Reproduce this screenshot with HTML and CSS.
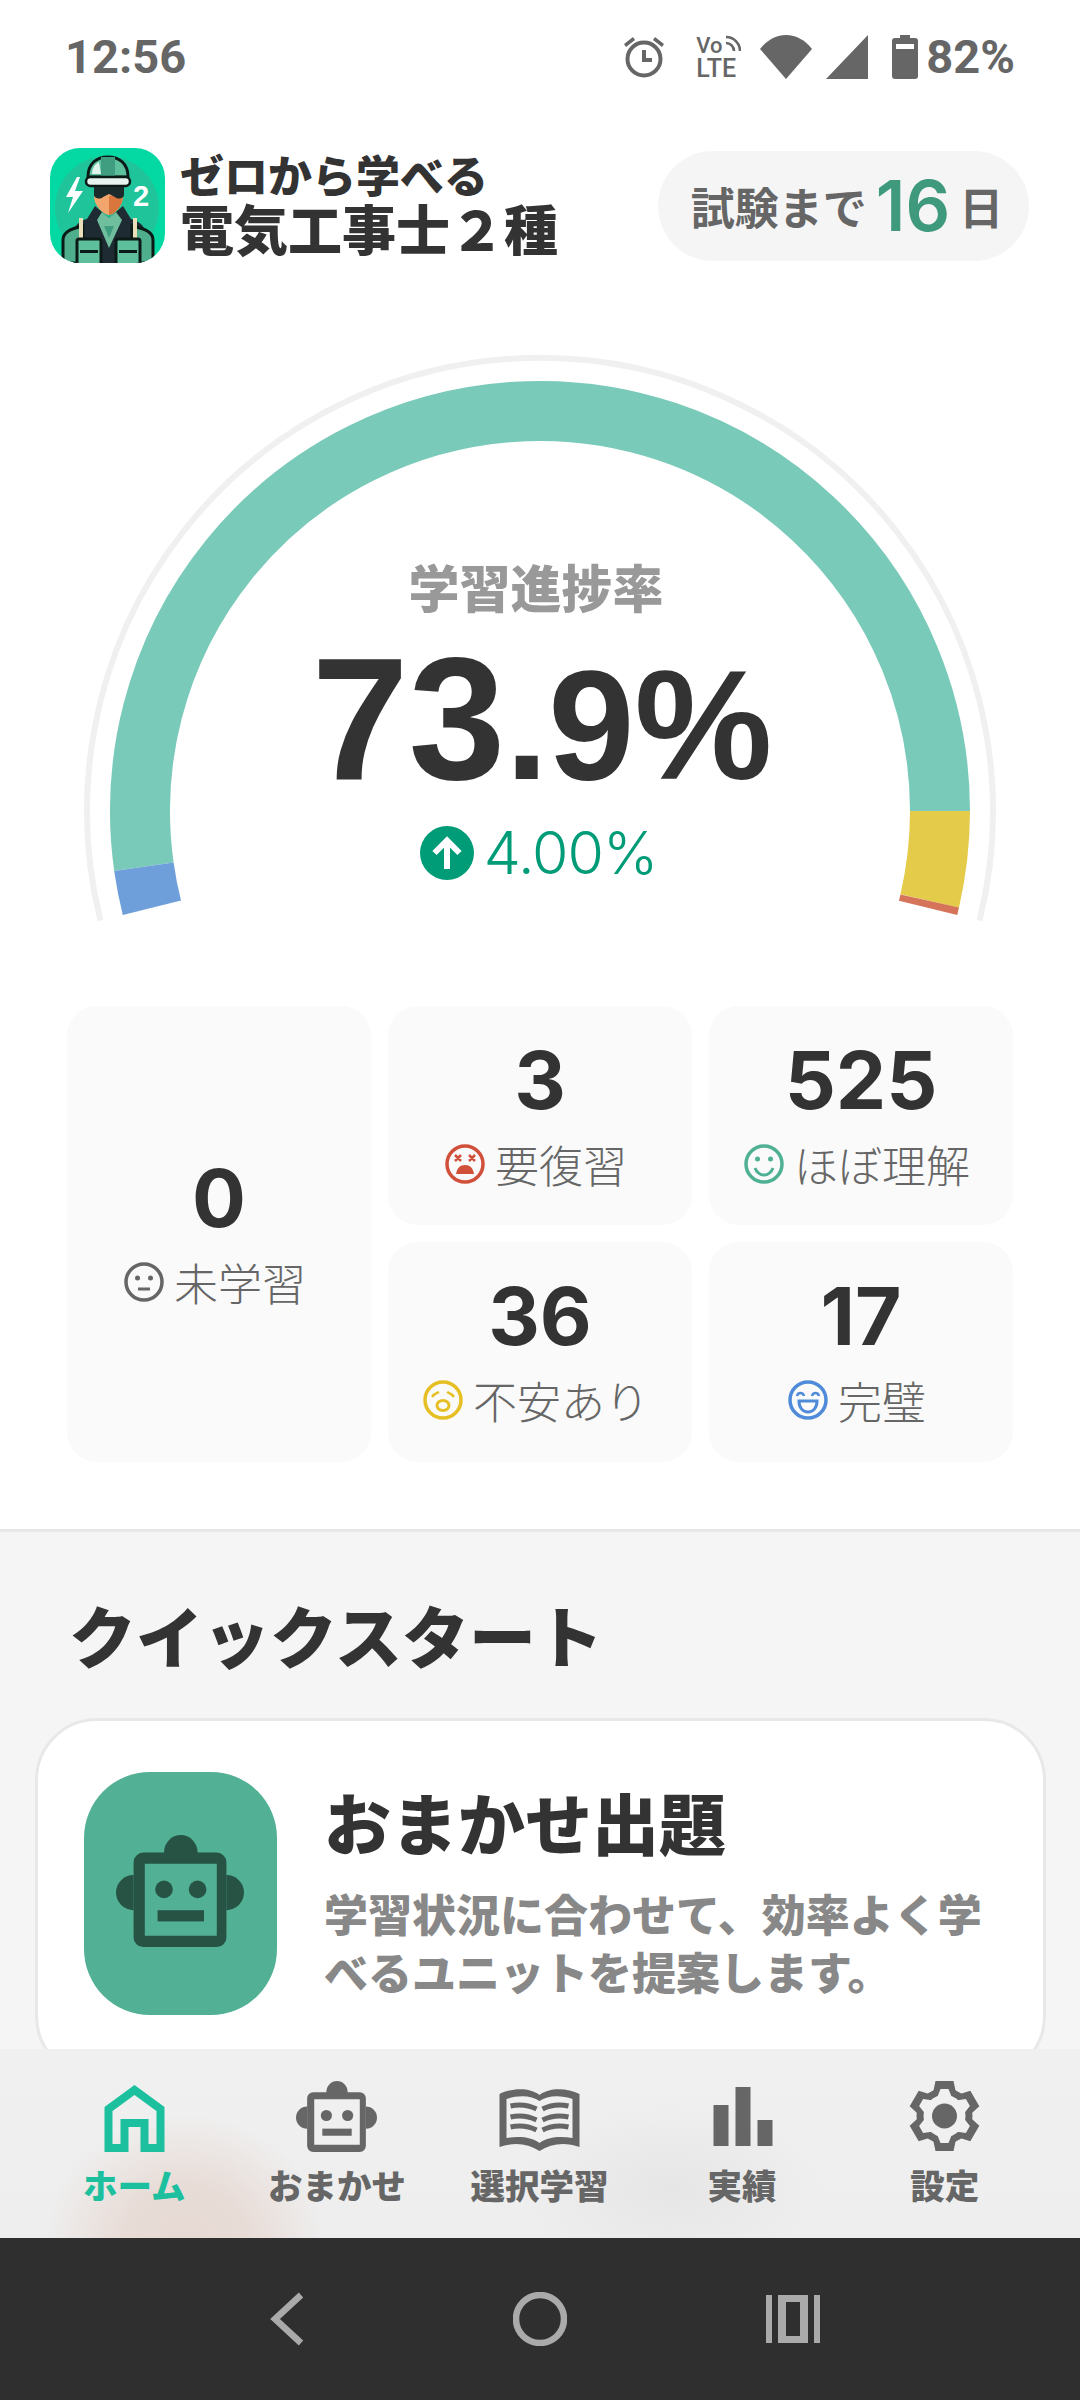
FILE: index.html
```html
<!DOCTYPE html>
<html lang="ja">
<head>
<meta charset="utf-8">
<title>電気工事士2種</title>
<link rel="stylesheet" href="styles.css">
</head>
<body>
<svg class="defs" width="0" height="0" aria-hidden="true">
  <symbol id="robot" viewBox="0 0 80 70">
    <path d="M30 11a10.500 11 0 0 1 21 0h12a6 6 0 0 1 6 6v47a6 6 0 0 1-6 6H17a6 6 0 0 1-6-6V17a6 6 0 0 1 6-6zM18 18v45h45V18z" fill-rule="evenodd"/>
    <path d="M11 25a11 11 0 0 0 0 22zM69 25a11 11 0 0 1 0 22z"/>
    <circle cx="30" cy="34" r="5.500"/><circle cx="51" cy="34" r="5.500"/>
    <rect x="26" y="47" width="29" height="7"/>
  </symbol>
</svg>
<div class="screen">
  <main class="content">
    <div class="status">
      <span class="clock">12:56</span>
      <div class="status-right">
        <svg class="st-alarm" viewBox="0 0 44 44"><circle cx="22" cy="24" r="16.500" fill="none" stroke="#666" stroke-width="4"/><path d="M22 15v10h8" fill="none" stroke="#666" stroke-width="4"/><path d="M2 9l9-7 2 3-9 7zM42 9l-9-7-2 3 9 7z" fill="#666"/></svg>
        <div class="st-volte"><span class="vo">Vo<svg class="vo-waves" viewBox="0 0 16 16"><path d="M1 8a8 8 0 0 1 8 8M1 2a14 14 0 0 1 14 14" fill="none" stroke="#666" stroke-width="2.600"/></svg></span><span class="lte">LTE</span></div>
        <svg class="st-wifi" viewBox="0 0 52 44"><path d="M26 44L0 14C7 5 16 0 26 0s19 5 26 14z" fill="#666"/></svg>
        <svg class="st-signal" viewBox="0 0 42 44"><path d="M42 0v44H0z" fill="#666"/></svg>
        <svg class="st-battery" viewBox="0 0 26 44"><path d="M8 0h10v3h5a3 3 0 0 1 3 3v35a3 3 0 0 1-3 3H3a3 3 0 0 1-3-3V6a3 3 0 0 1 3-3h5z" fill="#666"/><rect x="4" y="9" width="18" height="5" fill="#fff"/></svg>
        <span class="pct">82%</span>
      </div>
    </div>

    <header class="app-header">
      <svg class="logo" viewBox="0 0 115 115">
        <defs><clipPath id="logo-clip"><rect width="115" height="115" rx="30"/></clipPath></defs>
        <g clip-path="url(#logo-clip)">
          <rect width="115" height="115" fill="#05d9a3"/>
          <circle cx="57" cy="60" r="52" fill="#20c49b"/>
          <path d="M27 29L16 49h7l-5 16 15-22h-8l5-14z" fill="#fff"/>
          <text class="logo-two" x="83" y="58">2</text>
          <path d="M38 29c0-14 9-20 20-20s20 6 20 20z" fill="#5cc09c" stroke="#0b1a16" stroke-width="3"/>
          <rect x="51" y="9" width="14" height="20" fill="#3f9e7f"/>
          <path d="M42 26c0-6 3-10 7-12l2 12z" fill="#dff5ec"/>
          <path d="M44 38h29v10c0 10-9 19-14 19s-15-9-15-19z" fill="#f3a66b"/>
          <path d="M59 48v19c5 0 14-9 14-19z" fill="#d9763d"/>
          <rect x="36" y="29" width="44" height="9" rx="4.500" fill="#e8f2ee" stroke="#0b1a16" stroke-width="2.500"/>
          <path d="M44 39h30v8c0 3-6 5-9 2l-6-3-6 3c-3 3-9 1-9-2z" fill="#1b2a2a"/>
          <path d="M24 115V85c0-8 6-12 13-14l8-13 14 12 14-12 8 13c7 2 14 6 14 14v30z" fill="#1e2b33"/>
          <path d="M47 72l5-8 7 6 7-6 6 8-13 28z" fill="#6fbf9f"/>
          <path d="M54 78h10l-5 12z" fill="#3f9e7f"/>
          <path d="M13 115V92c0-7 6-11 20-14v37zM103 115V92c0-7-6-11-21-14v37z" fill="#4fae8c" stroke="#0b1a16" stroke-width="3"/>
          <path d="M29 70h4v22h-4zM83 70h4v22h-4z" fill="#e9dfb8"/>
          <rect x="27" y="91" width="24" height="30" rx="2" fill="#5ebf9c" stroke="#0b1a16" stroke-width="3"/>
          <rect x="66" y="91" width="24" height="30" rx="2" fill="#5ebf9c" stroke="#0b1a16" stroke-width="3"/>
          <rect x="30" y="102" width="18" height="3" fill="#0b1a16"/>
          <rect x="69" y="102" width="18" height="3" fill="#0b1a16"/>
        </g>
      </svg>
      <h1 class="app-title"><span class="title-top">ゼロから学べる</span><span class="title-main">電気工事士２種</span></h1>
      <div class="countdown"><span class="cd-text">試験まで</span><span class="cd-num">16</span><span class="cd-text">日</span></div>
    </header>

    <section class="gauge">
      <svg class="gauge-svg" viewBox="0 0 1080 590">
        <g fill="none">
          <path d="M100.500 580.600A453 453 0 1 1 979.500 580.600" stroke="#f0f0f0" stroke-width="6"/>
          <path d="M143.900 526.700A400 400 0 1 1 940 471" stroke="#7acab9" stroke-width="60"/>
          <path d="M151.900 567.800A400 400 0 0 1 143.900 526.700" stroke="#6f9fdb" stroke-width="60"/>
          <path d="M940 471A400 400 0 0 1 929.700 561" stroke="#e5cb4a" stroke-width="60"/>
          <path d="M929.700 561A400 400 0 0 1 928.100 567.800" stroke="#d5745a" stroke-width="60"/>
        </g>
      </svg>
      <div class="gauge-center">
        <div class="gauge-label">学習進捗率</div>
        <div class="gauge-value"><span class="gv-big">73</span><span class="gv-small">.9%</span></div>
        <div class="gauge-delta">
          <svg class="delta-icon" viewBox="0 0 54 54"><circle cx="27" cy="27" r="27" fill="#009b77"/><path d="M27 43V14M14.500 27L27 14.500 39.500 27" fill="none" stroke="#fff" stroke-width="6"/></svg>
          <span>4.00%</span>
        </div>
      </div>
    </section>

    <section class="stats">
      <div class="stat stat-tall">
        <div class="stat-num">0</div>
        <div class="stat-label">
          <svg class="face" viewBox="0 0 40 40" fill="none" stroke="#666" stroke-width="3.500"><circle cx="20" cy="20" r="18"/><path d="M14 27h12" stroke-width="3"/><circle cx="13.500" cy="16" r="2.500" fill="#666" stroke="none"/><circle cx="26.500" cy="16" r="2.500" fill="#666" stroke="none"/></svg>
          <span>未学習</span>
        </div>
      </div>
      <div class="stat">
        <div class="stat-num">3</div>
        <div class="stat-label">
          <svg class="face" viewBox="0 0 40 40" fill="none" stroke="#d1503a" stroke-width="3.500"><circle cx="20" cy="20" r="18"/><path d="M10 11l6 6M16 11l-6 6M24 11l6 6M30 11l-6 6" stroke-width="2.500"/><path d="M11 30c1-6 4-9 9-9s8 3 9 9z" fill="#d1503a" stroke="none"/></svg>
          <span>要復習</span>
        </div>
      </div>
      <div class="stat">
        <div class="stat-num">525</div>
        <div class="stat-label">
          <svg class="face" viewBox="0 0 40 40" fill="none" stroke="#4fb094" stroke-width="3.500"><circle cx="20" cy="20" r="18"/><path d="M11 24c2 5 5 7 9 7s7-2 9-7" stroke-width="3"/><circle cx="13.500" cy="15" r="2.500" fill="#4fb094" stroke="none"/><circle cx="26.500" cy="15" r="2.500" fill="#4fb094" stroke="none"/></svg>
          <span>ほぼ理解</span>
        </div>
      </div>
      <div class="stat">
        <div class="stat-num">36</div>
        <div class="stat-label">
          <svg class="face" viewBox="0 0 40 40" fill="none" stroke="#e6bf25" stroke-width="3.500"><circle cx="20" cy="20" r="18"/><path d="M9 17c2-3 5-4 7-5M31 17c-2-3-5-4-7-5" stroke-width="2.500"/><ellipse cx="20" cy="25.500" rx="6" ry="5" stroke-width="3"/></svg>
          <span>不安あり</span>
        </div>
      </div>
      <div class="stat">
        <div class="stat-num">17</div>
        <div class="stat-label">
          <svg class="face" viewBox="0 0 40 40" fill="none" stroke="#4f8bd8" stroke-width="3.500"><circle cx="20" cy="20" r="18"/><path d="M9 16c1-4 6-4 7 0M24 16c1-4 6-4 7 0" stroke-width="2.500"/><path d="M11 21h18c0 7-4 11-9 11s-9-4-9-11z" stroke-width="3"/></svg>
          <span>完璧</span>
        </div>
      </div>
    </section>

    <section class="quick">
      <h2 class="quick-title">クイックスタート</h2>
      <div class="quick-card">
        <div class="quick-icon"><svg class="quick-robot"><use href="#robot"/></svg></div>
        <div class="quick-body">
          <div class="quick-name">おまかせ出題</div>
          <p class="quick-desc">学習状況に合わせて、効率よく学べるユニットを提案します。</p>
        </div>
      </div>
    </section>
  </main>

  <nav class="tabbar">
    <div class="tab tab-active">
      <svg class="tab-icon" viewBox="-10.500 -4 81 71"><path d="M4 63V24L30 5l26 19v39H40V38H20v25z" fill="none" stroke="#1cbf9e" stroke-width="8"/></svg>
      <span>ホーム</span>
    </div>
    <div class="tab">
      <svg class="tab-icon tab-robot"><use href="#robot"/></svg>
      <span>おまかせ</span>
    </div>
    <div class="tab">
      <svg class="tab-icon" viewBox="-0.500 -8 81 71"><path d="M0 5C12-1 30-2 40 6 50-2 68-1 80 5v53c-14-5-28-4-40 4-12-8-26-9-40-4z" fill="#666"/><path d="M7 10c11-4 25-4 33 2 8-6 22-6 33-2v39c-13-2-25-1-33 5-8-6-20-7-33-5z" fill="#f0f0f0"/><path d="M11 17c9-2 18-1 26 3M11 28c9-2 18-1 26 3M11 38c9-2 18-1 26 3M69 17c-9-2-18-1-26 3M69 28c-9-2-18-1-26 3M69 38c-9-2-18-1-26 3" fill="none" stroke="#666" stroke-width="5"/></svg>
      <span>選択学習</span>
    </div>
    <div class="tab">
      <svg class="tab-icon" viewBox="0 0 81 71"><path d="M11.500 24h15v41h-15zM33.500 6h15v59h-15zM55.500 39h15v26h-15z" fill="#666"/></svg>
      <span>実績</span>
    </div>
    <div class="tab">
      <svg class="tab-icon" viewBox="-5.500 0 81 71">
        <circle cx="35" cy="35" r="28" fill="#666"/>
        <g fill="#666">
          <path d="M26 0h18l3 14H23zM26 70h18l3-14H23z"/>
          <path d="M26 0h18l3 14H23zM26 70h18l3-14H23z" transform="rotate(60 35 35)"/>
          <path d="M26 0h18l3 14H23zM26 70h18l3-14H23z" transform="rotate(120 35 35)"/>
        </g>
        <circle cx="35" cy="35" r="21" fill="#f0f0f0"/>
        <g fill="#f0f0f0">
          <path d="M31 8h8l4 10H27zM31 62h8l4-10H27z"/>
          <path d="M31 8h8l4 10H27zM31 62h8l4-10H27z" transform="rotate(60 35 35)"/>
          <path d="M31 8h8l4 10H27zM31 62h8l4-10H27z" transform="rotate(120 35 35)"/>
        </g>
        <circle cx="35" cy="35" r="12.500" fill="#666"/>
      </svg>
      <span>設定</span>
    </div>
  </nav>

  <footer class="sysnav">
    <svg class="sys-back" viewBox="0 0 34 54"><path d="M31 3L5 27l26 24" fill="none" stroke="#aaa" stroke-width="6.500"/></svg>
    <svg class="sys-home" viewBox="0 0 54 54"><circle cx="27" cy="27" r="24" fill="none" stroke="#aaa" stroke-width="6.500"/></svg>
    <svg class="sys-recent" viewBox="0 0 54 48"><path d="M0 0h6v48H0zM48 0h6v48h-6z" fill="#aaa"/><path d="M12 0h30v48H12zM20 7v34h14V7z" fill="#aaa" fill-rule="evenodd"/></svg>
  </footer>
</div>
</body>
</html>
```
FILE: styles.css
```css
* { box-sizing: border-box; }
html, body { margin: 0; padding: 0; background: #fff; }
body {
  font-family: "Noto Sans CJK JP", "Noto Sans", sans-serif;
  color: #333;
}
.defs { position: absolute; }
.screen {
  width: 1080px;
  height: 2400px;
  display: flex;
  flex-direction: column;
  overflow: hidden;
  position: relative;
}
.content { height: 2238px; overflow: hidden; flex: none; }

/* status bar */
.status {
  height: 112px;
  padding: 29px 65px 0 65px;
  display: flex;
  justify-content: space-between;
  align-items: flex-start;
  color: #666;
}
.clock, .pct {
  font-family: Roboto, sans-serif;
  font-weight: 700;
  font-size: 47px;
  line-height: 56px;
  color: #666;
}
.status-right { display: flex; align-items: center; height: 56px; }
.st-alarm { width: 44px; height: 44px; margin-right: 30px; }
.st-volte {
  width: 46px;
  margin-right: 18px;
  font-family: Roboto, sans-serif;
  font-weight: 500;
  color: #666;
  display: flex;
  flex-direction: column;
  gap: 2px;
}
.vo { font-size: 22px; line-height: 20px; display: flex; align-items: center; }
.vo-waves { width: 16px; height: 16px; margin: -6px 0 0 2px; }
.lte { font-size: 25px; line-height: 21px; }
.st-wifi { width: 52px; height: 44px; margin-right: 14px; }
.st-signal { width: 42px; height: 44px; margin-right: 24px; }
.st-battery { width: 26px; height: 44px; margin-right: 8px; }

/* header */
.app-header {
  height: 115px;
  margin-top: 36px;
  padding: 0 51px 0 50px;
  display: flex;
  align-items: center;
}
.logo { width: 115px; height: 115px; flex: none; }
.logo-two { font-family: "Liberation Sans", sans-serif; font-weight: 700; font-size: 29px; fill: #fff; }
.app-title {
  margin: 0 0 0 15px;
  padding-bottom: 6px;
  display: flex;
  flex-direction: column;
  font-weight: 900;
  color: #333;
}
.title-top { font-size: 44px; line-height: 50px; }
.title-main { font-size: 54px; line-height: 58px; font-weight: 900; }
.countdown {
  margin-left: auto;
  width: 371px;
  height: 110px;
  border-radius: 55px;
  background: #f5f5f5;
  padding-left: 7px;
  display: flex;
  align-items: center;
  justify-content: center;
  gap: 9px;
}
.cd-text { font-size: 44px; font-weight: 700; color: #666; line-height: 60px; }
.cd-num { font-family: Inter, sans-serif; font-size: 70px; font-weight: 600; color: #3f9a7d; line-height: 70px; }

/* gauge */
.gauge { position: relative; height: 590px; margin-top: 77px; }
.gauge-svg { display: block; width: 1080px; height: 590px; }
.gauge-center {
  position: absolute;
  left: 0;
  right: 0;
  top: 211px;
  display: flex;
  flex-direction: column;
  align-items: center;
}
.gauge-label { font-size: 51px; line-height: 70px; font-weight: 900; color: #999; padding-right: 8px; }
.gauge-value {
  font-family: "Liberation Sans", sans-serif;
  font-weight: 700;
  color: #333;
  line-height: 160px;
  height: 160px;
  margin-top: 18px;
  padding-left: 4px;
  white-space: nowrap;
}
.gv-big { font-size: 174px; }
.gv-small { font-size: 155px; }
.gauge-delta {
  display: flex;
  align-items: center;
  gap: 10px;
  margin-top: 19px;
  padding-right: 3px;
  font-family: Inter, sans-serif;
  font-weight: 300;
  font-size: 59px;
  line-height: 70px;
  letter-spacing: -1px;
  color: #009b77;
}
.delta-icon { width: 54px; height: 54px; }

/* stats */
.stats {
  margin-top: 76px;
  padding: 0 67px;
  display: grid;
  grid-template-columns: repeat(3, 304px);
  grid-template-rows: 219px 220px;
  gap: 17px;
}
.stat {
  background: #fafafa;
  border-radius: 30px;
  display: flex;
  flex-direction: column;
  align-items: center;
  justify-content: center;
}
.stat-tall { grid-row: span 2; }
.stat-num {
  font-family: Inter, sans-serif;
  font-weight: 700;
  font-size: 80px;
  line-height: 92px;
  color: #333;
  margin-top: -4px;
}
.stat-label {
  display: flex;
  align-items: center;
  gap: 10px;
  padding-right: 8px;
  margin-top: 8px;
  font-size: 44px;
  line-height: 60px;
  font-weight: 300;
  color: #666;
}
.face { width: 40px; height: 40px; flex: none; }

/* quick start */
.quick {
  margin-top: 67px;
  border-top: 3px solid #e8e8e8;
  background: #f5f5f5;
  padding: 60px 34px 0 35px;
  height: 800px;
}
.quick-title { margin: 0 0 0 34px; font-size: 67px; line-height: 84px; font-weight: 900; color: #333; }
.quick-card {
  margin-top: 42px;
  height: 360px;
  background: #fff;
  border: 3px solid #e8e8e8;
  border-radius: 62px;
  padding: 51px 46px 0 46px;
  display: flex;
  align-items: flex-start;
  gap: 47px;
}
.quick-icon {
  width: 193px;
  height: 243px;
  flex: none;
  border-radius: 66px;
  background: #52b094;
  padding: 0 2px 6px 0;
  display: flex;
  align-items: center;
  justify-content: center;
}
.quick-robot { width: 130px; height: 112px; fill: #275345; }
.quick-body { flex: 1; min-width: 0; }
.quick-name { font-size: 67px; line-height: 80px; font-weight: 900; color: #333; margin-top: 9px; }
.quick-desc { margin: 23px 0 0 0; font-size: 44px; line-height: 58px; font-weight: 900; color: #888; }

/* bottom tabs */
.tabbar {
  position: absolute;
  left: 0;
  right: 0;
  top: 2049px;
  height: 189px;
  padding: 32px 34px 0 33px;
  display: grid;
  grid-template-columns: repeat(5, 1fr);
  background:
    radial-gradient(ellipse 140px 130px at 185px 195px, #e6d9d3 0%, #e8dcd7 45%, rgba(240,240,240,0) 100%),
    radial-gradient(ellipse 150px 90px at 670px 140px, #e6e6e6 0%, rgba(240,240,240,0) 100%),
    linear-gradient(#f0f0f0, #eeeeee);
}
.tab {
  display: flex;
  flex-direction: column;
  align-items: center;
  font-size: 34.500px;
  font-weight: 900;
  line-height: 44px;
  color: #666;
}
.tab-active { color: #1cbf9e; }
.tab-icon { height: 71px; width: 81px; display: block; margin-bottom: 10px; }
.tab-robot { fill: #666; }

/* system nav */
.sysnav {
  flex: none;
  height: 162px;
  background: #2f2f2f;
  display: flex;
  align-items: center;
  position: relative;
}
.sys-back { width: 34px; height: 54px; margin-left: 270px; }
.sys-home { width: 54px; height: 54px; margin-left: 209px; }
.sys-recent { width: 54px; height: 48px; margin-left: 199px; }
```
